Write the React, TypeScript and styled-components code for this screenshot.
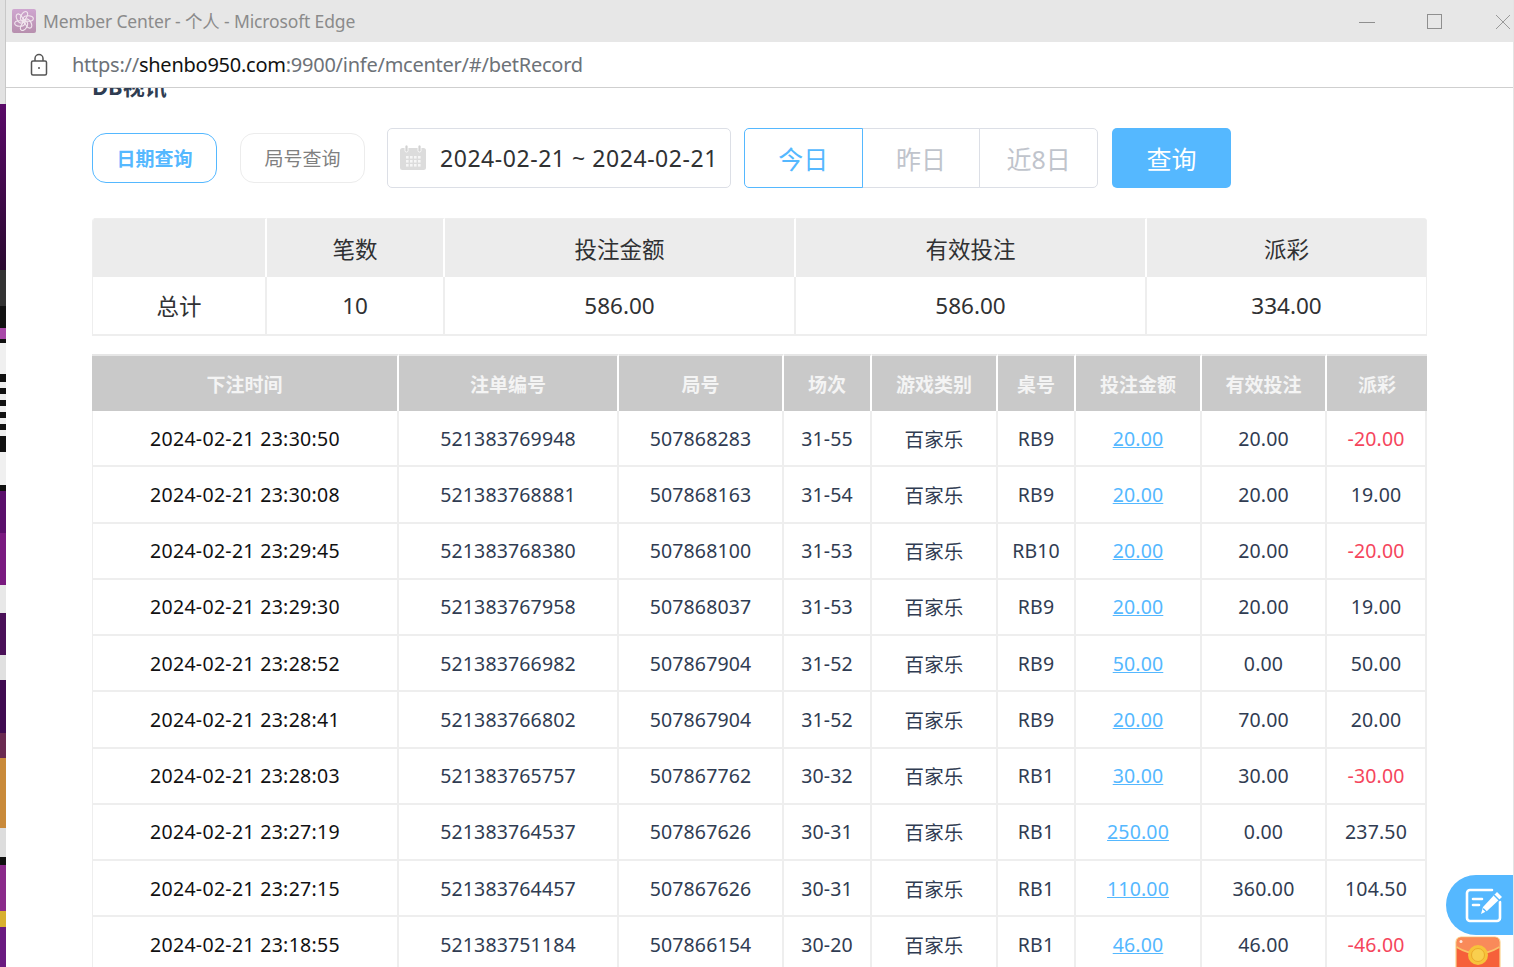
import React from 'react';
import styled, { createGlobalStyle } from 'styled-components';

const Global = createGlobalStyle`
  html, body { margin: 0; padding: 0; height: 100%; overflow: hidden; background: #fff; }
  #root { height: 100%; }
`;
const FONT = `"Noto Sans", "Noto Sans CJK SC", sans-serif`;

const Desktop = styled.div`
  display: flex; width: 1514px; height: 967px; overflow: hidden; font-family: ${FONT}; color: #303133;
`;
const Wallpaper = styled.div`
  width: 6px; flex: none;
  background:
    linear-gradient(90deg, transparent 5px, #c8c8c8 5px) 0 0 / 6px 104px no-repeat,
    linear-gradient(180deg,
    #e2e2e2 0 104px, #5a0a68 104px, #2a0a30 270px, #333 270px 306px, #111 306px 328px, #a848a8 328px 339px,
    #111 339px 343px, #f0f0f0 343px 374px, #111 374px 382px,
    #eee 382px 388px, #111 388px 394px, #eee 394px 400px, #111 400px 406px, #eee 406px 412px, #111 412px 418px,
    #eee 418px 424px, #111 424px 430px, #eee 430px 436px, #111 436px 452px,
    #f0f0f0 452px 485px, #111 485px 491px,
    #5a0f6b 491px 533px, #7a1a80 533px 585px, #e8e8e8 585px 613px, #4a1058 613px 655px, #e0e0e0 655px 680px, #3f0b50 680px 733px,
    #6a2a50 733px 758px, #c98a3a 758px 828px, #ddd 828px 857px, #111 857px 865px, #8a2a8a 865px 911px, #d8b030 911px 927px, #6a1a80 927px 967px);
`;
const Window = styled.div`
  flex: 1; min-width: 0; display: flex; flex-direction: column; border-right: 1px solid #e4e4e4;
`;
const TitleBar = styled.header`
  height: 42px; box-sizing: border-box; flex: none; background: #e7e7e7; display: flex; align-items: center; padding: 0 2px 0 6px;
`;
const Favicon = styled.svg`width: 24px; height: 24px; flex: none; margin-top: -1px;`;
const WindowTitle = styled.span`
  margin: -2px 0 0 7px; font-size: 17.5px; color: #8b8b8b; flex: 1; letter-spacing: -0.15px;
`;
const WinButton = styled.svg<{ $gap: number }>`
  width: 16px; height: 16px; flex: none; margin-left: ${p => p.$gap}px; margin-top: 1px;
`;
const AddressBar = styled.div`
  height: 45px; flex: none; background: #fff; border-bottom: 1px solid #cfcfcf; display: flex; align-items: center; padding-left: 23px;
`;
const Url = styled.span`
  margin: 0 0 0 23px; font-size: 20px; color: #6d7278; letter-spacing: -0.25px;
  b { font-weight: 400; color: #111; }
`;
const Page = styled.main`
  flex: 1; min-height: 0; overflow: hidden; padding: 0 87px 0 86px; position: relative; background: #fff;
`;
const Heading = styled.h2`
  margin: -12px 0 0; height: 20px; line-height: 20px; font-size: 22px; font-weight: 700; color: #2f3d52;
`;
const Toolbar = styled.div`
  display: flex; align-items: center; margin-top: 32px; height: 60px;
`;
const Tab = styled.button<{ $active?: boolean }>`
  width: 125px; height: 50px; border-radius: 14px; background: #fff; font: inherit; font-size: 19px; padding: 0;
  border: 1px solid ${p => (p.$active ? '#55b8ff' : '#ececec')};
  color: ${p => (p.$active ? '#55b8ff' : '#808080')};
  font-weight: ${p => (p.$active ? 700 : 400)};
  margin-right: 23px;
`;
const DateBox = styled.div`
  width: 344px; height: 60px; box-sizing: border-box; border: 1px solid #dcdfe6; border-radius: 5px; display: flex; align-items: center;
  padding-left: 12px; font-size: 23px; color: #303133; letter-spacing: 0.55px; margin-left: -1px; margin-right: 13px;
  span { margin-left: 14px; white-space: nowrap; }
`;
const Segments = styled.div`display: flex; height: 60px;`;
const Segment = styled.button<{ $active?: boolean }>`
  width: 118.67px; height: 60px; box-sizing: border-box; padding: 0; background: #fff; font: inherit; font-size: 25px; margin-left: -1px;
  border: 1px solid ${p => (p.$active ? '#55b8ff' : '#dcdfe6')};
  color: ${p => (p.$active ? '#55b8ff' : '#c0c4cc')};
  position: relative; z-index: ${p => (p.$active ? 1 : 0)};
  &:first-child { margin-left: 0; border-radius: 5px 0 0 5px; }
  &:last-child { border-radius: 0 5px 5px 0; }
`;
const Search = styled.button`
  width: 119px; height: 60px; margin-left: 14px; border: 0; border-radius: 5px; background: #55b8ff; color: #fff; font: inherit; font-size: 25px; padding: 0;
`;
const Table = styled.table`
  table-layout: fixed; border-collapse: separate; border-spacing: 0; width: 1335px; display: table;
`;
const SummaryTable = styled(Table)`
  margin-top: 30px; border-left: 1px solid #eee; border-radius: 4px 4px 0 0; overflow: hidden;
  th { height: 58px; background: #ececec; font-weight: 400; font-size: 22.5px; color: #303133; border-right: 2px solid #fff; padding: 0; border-top: 1px solid #eee;}
  td { height: 57px; background: #fff; font-size: 22.5px; text-align: center; color: #303133; border-right: 2px solid #eee; border-bottom: 2px solid #eee; padding: 0; }
  th:last-child, td:last-child { border-right: 1px solid #eee; }
`;
const BetTable = styled(Table)`
  margin-top: 18px;
  th { height: 57px; box-sizing: border-box; background: #c9c9c9; color: #f4f4f4; font-size: 19px; font-weight: 700; border-right: 2px solid #fff; border-top: 2px solid #e6e6e6; padding: 0; }
  th:last-child { border-right: 0; }
  td { height: 56.25px; box-sizing: border-box; font-size: 19.5px; text-align: center; padding: 0; color: #303c52; border-right: 2px solid #eee; border-bottom: 2px solid #eee; white-space: nowrap; letter-spacing: 0.15px; }
  td:first-child { color: #111; border-left: 1px solid #eee; letter-spacing: 0.3px; }
`;
const AmountLink = styled.a`color: #55b8ff; text-decoration: underline;`;
const Payout = styled.span<{ $loss: boolean }>`color: ${p => (p.$loss ? '#f5455c' : 'inherit')};`;
const FloatDock = styled.div`
  position: absolute; right: 0; top: 787px; display: flex; flex-direction: column; align-items: flex-end;
`;
const Bubble = styled.div`
  width: 67px; height: 60px; border-radius: 30px 0 0 30px; background: #55b8ff; display: flex; align-items: center;
  svg { margin-left: 18px; }
`;
const Gift = styled.svg`width: 50px; height: 40px; margin: 0 10px 0 0;`;

const rows = [
  ['2024-02-21 23:30:50','521383769948','507868283','31-55','RB9','20.00','20.00','-20.00'],
  ['2024-02-21 23:30:08','521383768881','507868163','31-54','RB9','20.00','20.00','19.00'],
  ['2024-02-21 23:29:45','521383768380','507868100','31-53','RB10','20.00','20.00','-20.00'],
  ['2024-02-21 23:29:30','521383767958','507868037','31-53','RB9','20.00','20.00','19.00'],
  ['2024-02-21 23:28:52','521383766982','507867904','31-52','RB9','50.00','0.00','50.00'],
  ['2024-02-21 23:28:41','521383766802','507867904','31-52','RB9','20.00','70.00','20.00'],
  ['2024-02-21 23:28:03','521383765757','507867762','30-32','RB1','30.00','30.00','-30.00'],
  ['2024-02-21 23:27:19','521383764537','507867626','30-31','RB1','250.00','0.00','237.50'],
  ['2024-02-21 23:27:15','521383764457','507867626','30-31','RB1','110.00','360.00','104.50'],
  ['2024-02-21 23:18:55','521383751184','507866154','30-20','RB1','46.00','46.00','-46.00'],
];
const betCols = [307, 220, 165, 88, 126, 78, 126, 125, 100];
const sumCols = [174, 178, 351, 351, 280];

const FaviconIcon = () => (
  <Favicon viewBox="0 0 24 24">
    <defs>
      <linearGradient id="fav" x1="0" y1="0" x2="0" y2="1">
        <stop offset="0" stopColor="#cfa6d0" />
        <stop offset="1" stopColor="#b78fae" />
      </linearGradient>
    </defs>
    <rect width="24" height="24" rx="2" fill="url(#fav)" />
    <g fill="none" stroke="#f1e6ee" strokeWidth="1.1">
      {[0, 60, 120, 180, 240, 300].map(a => (
        <ellipse key={a} cx="12" cy="7" rx="2.8" ry="5" transform={`rotate(${a} 12 12) rotate(30 12 7)`} />
      ))}
    </g>
  </Favicon>
);
const Lock = () => (
  <svg width="20" height="24" viewBox="0 0 20 24" fill="none" stroke="#555" strokeWidth="1.5">
    <rect x="2.5" y="8" width="15" height="14" rx="1.5" />
    <path d="M6 8V5.5a4 4 0 0 1 8 0V8" />
    <circle cx="10" cy="15" r="1" fill="#555" stroke="none" />
  </svg>
);
const CalendarIcon = () => (
  <svg width="26" height="26" viewBox="0 0 26 26">
    <rect x="0" y="3" width="26" height="22" rx="2.5" fill="#dcdcdc" />
    <rect x="5" y="0" width="3" height="7" rx="1.5" fill="#d2d2d2" stroke="#fff" strokeWidth=".8" />
    <rect x="18" y="0" width="3" height="7" rx="1.5" fill="#d2d2d2" stroke="#fff" strokeWidth=".8" />
    <g fill="#f6f6f6">
      {[6, 10, 14, 18].flatMap(x => [11, 15, 19].map(y => <rect key={`${x}-${y}`} x={x} y={y} width="2.6" height="2.6" />))}
    </g>
  </svg>
);
const EditIcon = () => (
  <svg width="40" height="36" viewBox="0 0 40 36" fill="none" stroke="#fff" strokeWidth="2.6" strokeLinecap="round">
    <path d="M28 3H6a3 3 0 0 0-3 3v25a3 3 0 0 0 3 3h27a3 3 0 0 0 3-3V15" />
    <path d="M9 12h9M9 18h6" />
    <path d="M17 27l2-7L33 5l5 5-15 14z" fill="#fff" stroke="none" />
    <path d="M30.5 8.5l5 5" stroke="#55b8ff" strokeWidth="1.4" />
    <path d="M19.5 22l2.5 2.5" stroke="#55b8ff" strokeWidth="1.4" />
  </svg>
);
const GiftIcon = () => (
  <Gift viewBox="0 0 50 40">
    <path d="M3 7a5 5 0 0 1 5-5h34a5 5 0 0 1 5 5v33H3z" fill="#f6603a" stroke="#fcd28a" strokeWidth="1.2" />
    <path d="M4 7a4 4 0 0 1 4-4h34a4 4 0 0 1 4 4v5q-21 13-42 0z" fill="#f98a5a" />
    <path d="M3.5 12q21.500 13 43 0" fill="none" stroke="#f9c36a" strokeWidth="1.6" />
    <circle cx="25" cy="20" r="10" fill="#f7c33a" />
    <circle cx="25" cy="20" r="6.5" fill="#f9cf4e" stroke="#eba92a" />
    <circle cx="8" cy="6.500" r="1.500" fill="#fff" opacity=".8" />
  </Gift>
);

export default function App() {
  return (
    <Desktop>
      <Global />
      <Wallpaper />
      <Window>
        <TitleBar>
          <FaviconIcon />
          <WindowTitle>Member Center - 个人 - Microsoft Edge</WindowTitle>
          <WinButton $gap={0} viewBox="0 0 16 16" stroke="#8f8f8f" fill="none"><path d="M0 8.5h16" /></WinButton>
          <WinButton $gap={52} viewBox="0 0 16 16" stroke="#8f8f8f" fill="none"><rect x=".5" y=".5" width="14" height="14" /></WinButton>
          <WinButton $gap={52} viewBox="0 0 16 16" stroke="#999" fill="none"><path d="M1 1l14 14M15 1L1 15" /></WinButton>
        </TitleBar>
        <AddressBar>
          <Lock />
          <Url>https://<b>shenbo950.com</b>:9900/infe/mcenter/#/betRecord</Url>
        </AddressBar>
        <Page>
          <Heading>DB视讯</Heading>
          <Toolbar>
            <Tab $active>日期查询</Tab>
            <Tab>局号查询</Tab>
            <DateBox><CalendarIcon /><span>2024-02-21 ~ 2024-02-21</span></DateBox>
            <Segments>
              <Segment $active>今日</Segment>
              <Segment>昨日</Segment>
              <Segment>近8日</Segment>
            </Segments>
            <Search>查询</Search>
          </Toolbar>
          <SummaryTable>
            <colgroup>{sumCols.map((w, i) => <col key={i} style={{ width: w }} />)}</colgroup>
            <thead><tr><th></th><th>笔数</th><th>投注金额</th><th>有效投注</th><th>派彩</th></tr></thead>
            <tbody><tr><td>总计</td><td>10</td><td>586.00</td><td>586.00</td><td>334.00</td></tr></tbody>
          </SummaryTable>
          <BetTable>
            <colgroup>{betCols.map((w, i) => <col key={i} style={{ width: w }} />)}</colgroup>
            <thead>
              <tr>{['下注时间','注单编号','局号','场次','游戏类别','桌号','投注金额','有效投注','派彩'].map(h => <th key={h}>{h}</th>)}</tr>
            </thead>
            <tbody>
              {rows.map(r => (
                <tr key={r[0]}>
                  <td>{r[0]}</td><td>{r[1]}</td><td>{r[2]}</td><td>{r[3]}</td><td>百家乐</td><td>{r[4]}</td>
                  <td><AmountLink>{r[5]}</AmountLink></td><td>{r[6]}</td>
                  <td><Payout $loss={r[7].startsWith('-')}>{r[7]}</Payout></td>
                </tr>
              ))}
            </tbody>
          </BetTable>
          <FloatDock>
            <Bubble><EditIcon /></Bubble>
            <GiftIcon />
          </FloatDock>
        </Page>
      </Window>
    </Desktop>
  );
}
